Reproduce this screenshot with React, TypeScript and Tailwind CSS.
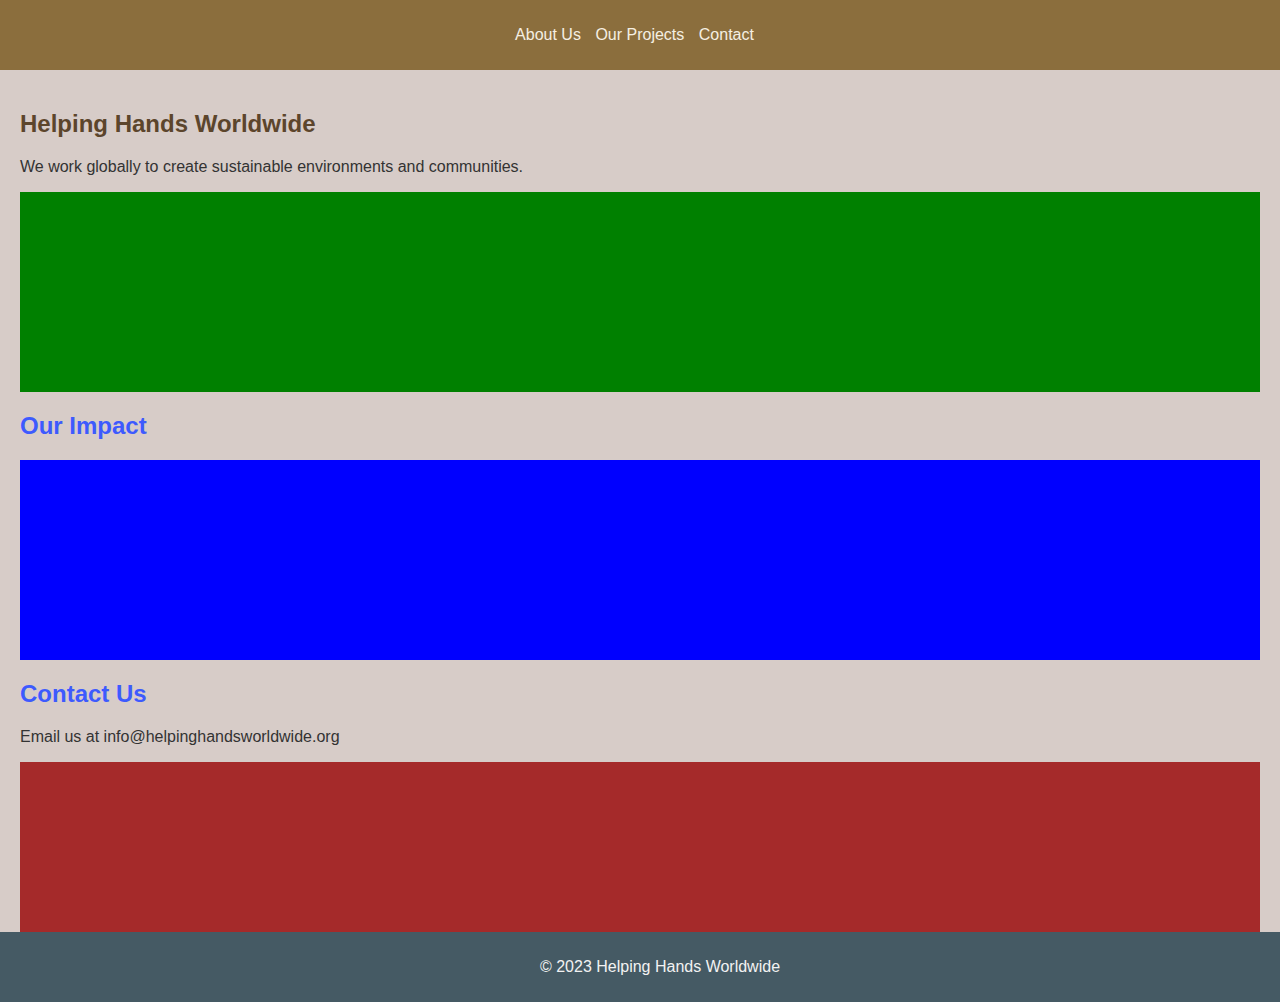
export default function App() {
    const links = ["About Us", "Our Projects", "Contact"];

    return (
        <div className="min-h-screen bg-[#d7ccc8] font-['Liberation_Sans',Arial,sans-serif] text-[#333333]">
            <header className="h-[70px] bg-[#8b6e3d] flex items-center justify-center pr-[11px]">
                <nav className="flex gap-[14.5px] text-base text-[#f5efe2]">
                    {links.map((l) => (
                        <a key={l} href="#" className="leading-[18px]">
                            {l}
                        </a>
                    ))}
                </nav>
            </header>

            <main className="px-5 pt-5 pb-[90px]">
                <section>
                    <h1 className="text-2xl font-bold text-[#5c452c] leading-[27.6px] mt-[20px] mb-[20px]">
                        Helping Hands Worldwide
                    </h1>
                    <p className="text-base leading-[18.4px] mb-4">
                        We work globally to create sustainable environments and communities.
                    </p>
                    <div className="h-[200px] bg-[#008000]"></div>
                </section>

                <section>
                    <h2 className="text-2xl font-bold text-[#3d5afe] leading-[27.6px] mt-[20px] mb-[20px]">
                        Our Impact
                    </h2>
                    <div className="h-[200px] bg-[#0000ff]"></div>
                </section>

                <section>
                    <h2 className="text-2xl font-bold text-[#3d5afe] leading-[27.6px] mt-[20px] mb-[20px]">
                        Contact Us
                    </h2>
                    <p className="text-base leading-[18.4px] pt-[1px] mb-[15px]">
                        Email us at info@helpinghandsworldwide.org
                    </p>
                    <div className="h-[200px] bg-[#a52a2a]"></div>
                </section>
            </main>

            <footer className="fixed bottom-0 left-0 right-0 h-[70px] bg-[#455a64] flex items-center justify-center pl-10 text-[#f2f2f2] text-base">
                © 2023 Helping Hands Worldwide
            </footer>
        </div>
    );
}
